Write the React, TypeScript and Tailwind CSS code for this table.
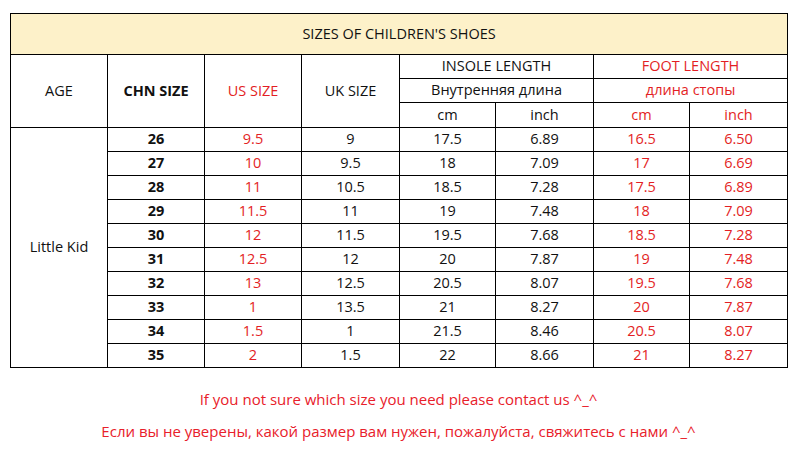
import React from "react";

const rows = [
  ["26", "9.5", "9", "17.5", "6.89", "16.5", "6.50"],
  ["27", "10", "9.5", "18", "7.09", "17", "6.69"],
  ["28", "11", "10.5", "18.5", "7.28", "17.5", "6.89"],
  ["29", "11.5", "11", "19", "7.48", "18", "7.09"],
  ["30", "12", "11.5", "19.5", "7.68", "18.5", "7.28"],
  ["31", "12.5", "12", "20", "7.87", "19", "7.48"],
  ["32", "13", "12.5", "20.5", "8.07", "19.5", "7.68"],
  ["33", "1", "13.5", "21", "8.27", "20", "7.87"],
  ["34", "1.5", "1", "21.5", "8.46", "20.5", "8.07"],
  ["35", "2", "1.5", "22", "8.66", "21", "8.27"],
];

const td = "border border-black text-center p-0 leading-none";
const red = "text-[#e31e24]";

export default function App() {
  return (
    <div className="w-[797px] h-[457px] bg-white text-[#111] text-[14.5px] pt-[13px]" style={{ fontFamily: '"Open Sans", "Noto Sans", sans-serif' }}>
      <table className="ml-[10px] w-[777px] border-collapse table-fixed border border-black">
        <colgroup>
          <col className="w-[97px]" />
          <col className="w-[97px]" />
          <col className="w-[97px]" />
          <col className="w-[98px]" />
          <col className="w-[96px]" />
          <col className="w-[98px]" />
          <col className="w-[96px]" />
          <col className="w-[98px]" />
        </colgroup>
        <tbody>
          <tr className="h-[41px]">
            <td colSpan={8} className={`${td} bg-[#fdf1c9]`}>SIZES OF CHILDREN'S SHOES</td>
          </tr>
          <tr className="h-[24px]">
            <td rowSpan={3} className={td}>AGE</td>
            <td rowSpan={3} className={`${td} font-bold`}>CHN SIZE</td>
            <td rowSpan={3} className={`${td} ${red}`}>US SIZE</td>
            <td rowSpan={3} className={td}>UK SIZE</td>
            <td colSpan={2} className={td}>INSOLE LENGTH</td>
            <td colSpan={2} className={`${td} ${red}`}>FOOT LENGTH</td>
          </tr>
          <tr className="h-[24px]">
            <td colSpan={2} className={td}>Внутренняя длина</td>
            <td colSpan={2} className={`${td} ${red}`}>длина стопы</td>
          </tr>
          <tr className="h-[25px]">
            <td className={td}>cm</td>
            <td className={td}>inch</td>
            <td className={`${td} ${red}`}>cm</td>
            <td className={`${td} ${red}`}>inch</td>
          </tr>
          {rows.map((r, i) => (
            <tr key={r[0]} className="h-[24px]">
              {i === 0 && (
                <td rowSpan={10} className={td}>Little Kid</td>
              )}
              <td className={`${td} font-bold`}>{r[0]}</td>
              <td className={`${td} ${red}`}>{r[1]}</td>
              <td className={td}>{r[2]}</td>
              <td className={td}>{r[3]}</td>
              <td className={td}>{r[4]}</td>
              <td className={`${td} ${red}`}>{r[5]}</td>
              <td className={`${td} ${red}`}>{r[6]}</td>
            </tr>
          ))}
        </tbody>
      </table>
      <div className="mt-[22px] flex flex-col items-center gap-[13px] text-[#e8202a] text-[15px] leading-[19px]">
        <p>If you not sure which size you need please contact us ^_^</p>
        <p>Если вы не уверены, какой размер вам нужен, пожалуйста, свяжитесь с нами ^_^</p>
      </div>
    </div>
  );
}
